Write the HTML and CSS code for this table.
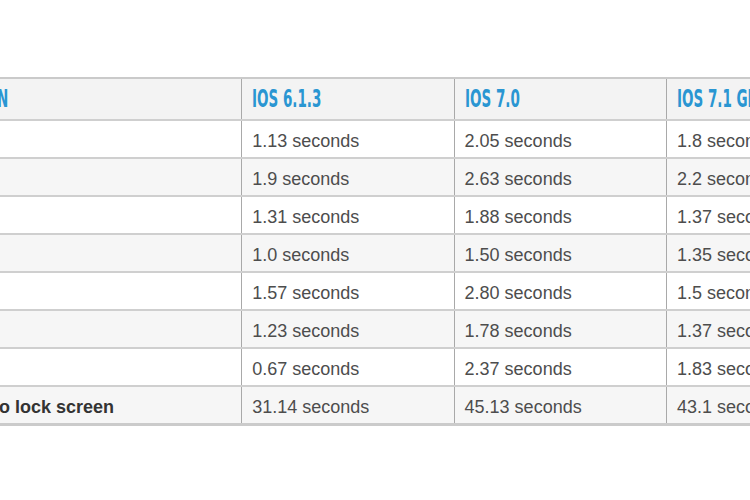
FILE: index.html
```html
<!DOCTYPE html>
<html>
<head>
<meta charset="utf-8">
<link rel="stylesheet" href="styles.css">
</head>
<body>
<table class="bench">
  <colgroup>
    <col class="w-label">
    <col class="w-col">
    <col class="w-col">
    <col class="w-col">
  </colgroup>
  <thead>
    <tr>
      <th class="c-label"><span class="hd">OPERATION</span></th>
      <th><span class="hd">IOS 6.1.3</span></th>
      <th><span class="hd">IOS 7.0</span></th>
      <th><span class="hd">IOS 7.1 GM</span></th>
    </tr>
  </thead>
  <tbody>
    <tr><td class="c-label"></td><td>1.13 seconds</td><td>2.05 seconds</td><td>1.8 seconds</td></tr>
    <tr><td class="c-label"></td><td>1.9 seconds</td><td>2.63 seconds</td><td>2.2 seconds</td></tr>
    <tr><td class="c-label"></td><td>1.31 seconds</td><td>1.88 seconds</td><td>1.37 seconds</td></tr>
    <tr><td class="c-label"></td><td>1.0 seconds</td><td>1.50 seconds</td><td>1.35 seconds</td></tr>
    <tr><td class="c-label"></td><td>1.57 seconds</td><td>2.80 seconds</td><td>1.5 seconds</td></tr>
    <tr><td class="c-label"></td><td>1.23 seconds</td><td>1.78 seconds</td><td>1.37 seconds</td></tr>
    <tr><td class="c-label"></td><td>0.67 seconds</td><td>2.37 seconds</td><td>1.83 seconds</td></tr>
    <tr class="total"><td class="c-label">Boot to lock screen</td><td>31.14 seconds</td><td>45.13 seconds</td><td>43.1 seconds</td></tr>
  </tbody>
</table>
</body>
</html>
```

FILE: styles.css
```css
html, body {
  margin: 0;
  padding: 0;
  background: #ffffff;
  overflow: hidden;
  width: 750px;
  height: 500px;
}

.bench {
  border-collapse: collapse;
  margin-top: 77px;
  margin-left: -63px;
  table-layout: fixed;
  width: 942px;
  font-family: "Liberation Sans", Arial, sans-serif;
  font-size: 18px;
  color: #4d4d4d;
}

.w-label { width: 304px; }
.w-col { width: 212px; }

.bench th,
.bench td {
  text-align: left;
  white-space: nowrap;
  overflow: hidden;
  padding: 0 0 0 10px;
  border-bottom: 2px solid #cfcfcf;
  border-left: 1px solid #a9a9a9;
}

.bench .c-label {
  border-left: none;
}

.bench thead th {
  height: 40px;
  background: #f3f3f3;
  border-top: 2px solid #cacaca;
  vertical-align: middle;
}

.bench thead th.c-label {
  text-indent: -26px;
}

.hd {
  display: inline-block;
  font-family: "DejaVu Sans Condensed", "DejaVu Sans", sans-serif;
  font-weight: bold;
  font-size: 25px;
  color: #2a96d2;
  transform: scaleX(0.6);
  transform-origin: left center;
  line-height: 1;
  text-indent: 0;
}

.bench tbody td {
  height: 32px;
  padding-top: 4px;
  vertical-align: middle;
}

.bench tbody tr:nth-child(odd) td {
  background: #ffffff;
}

.bench tbody tr:nth-child(even) td {
  background: #f6f6f6;
}

.bench tr.total td {
  border-bottom: 3px solid #cbcbcb;
}

.bench tr.total .c-label {
  font-weight: bold;
  color: #333333;
}
```
